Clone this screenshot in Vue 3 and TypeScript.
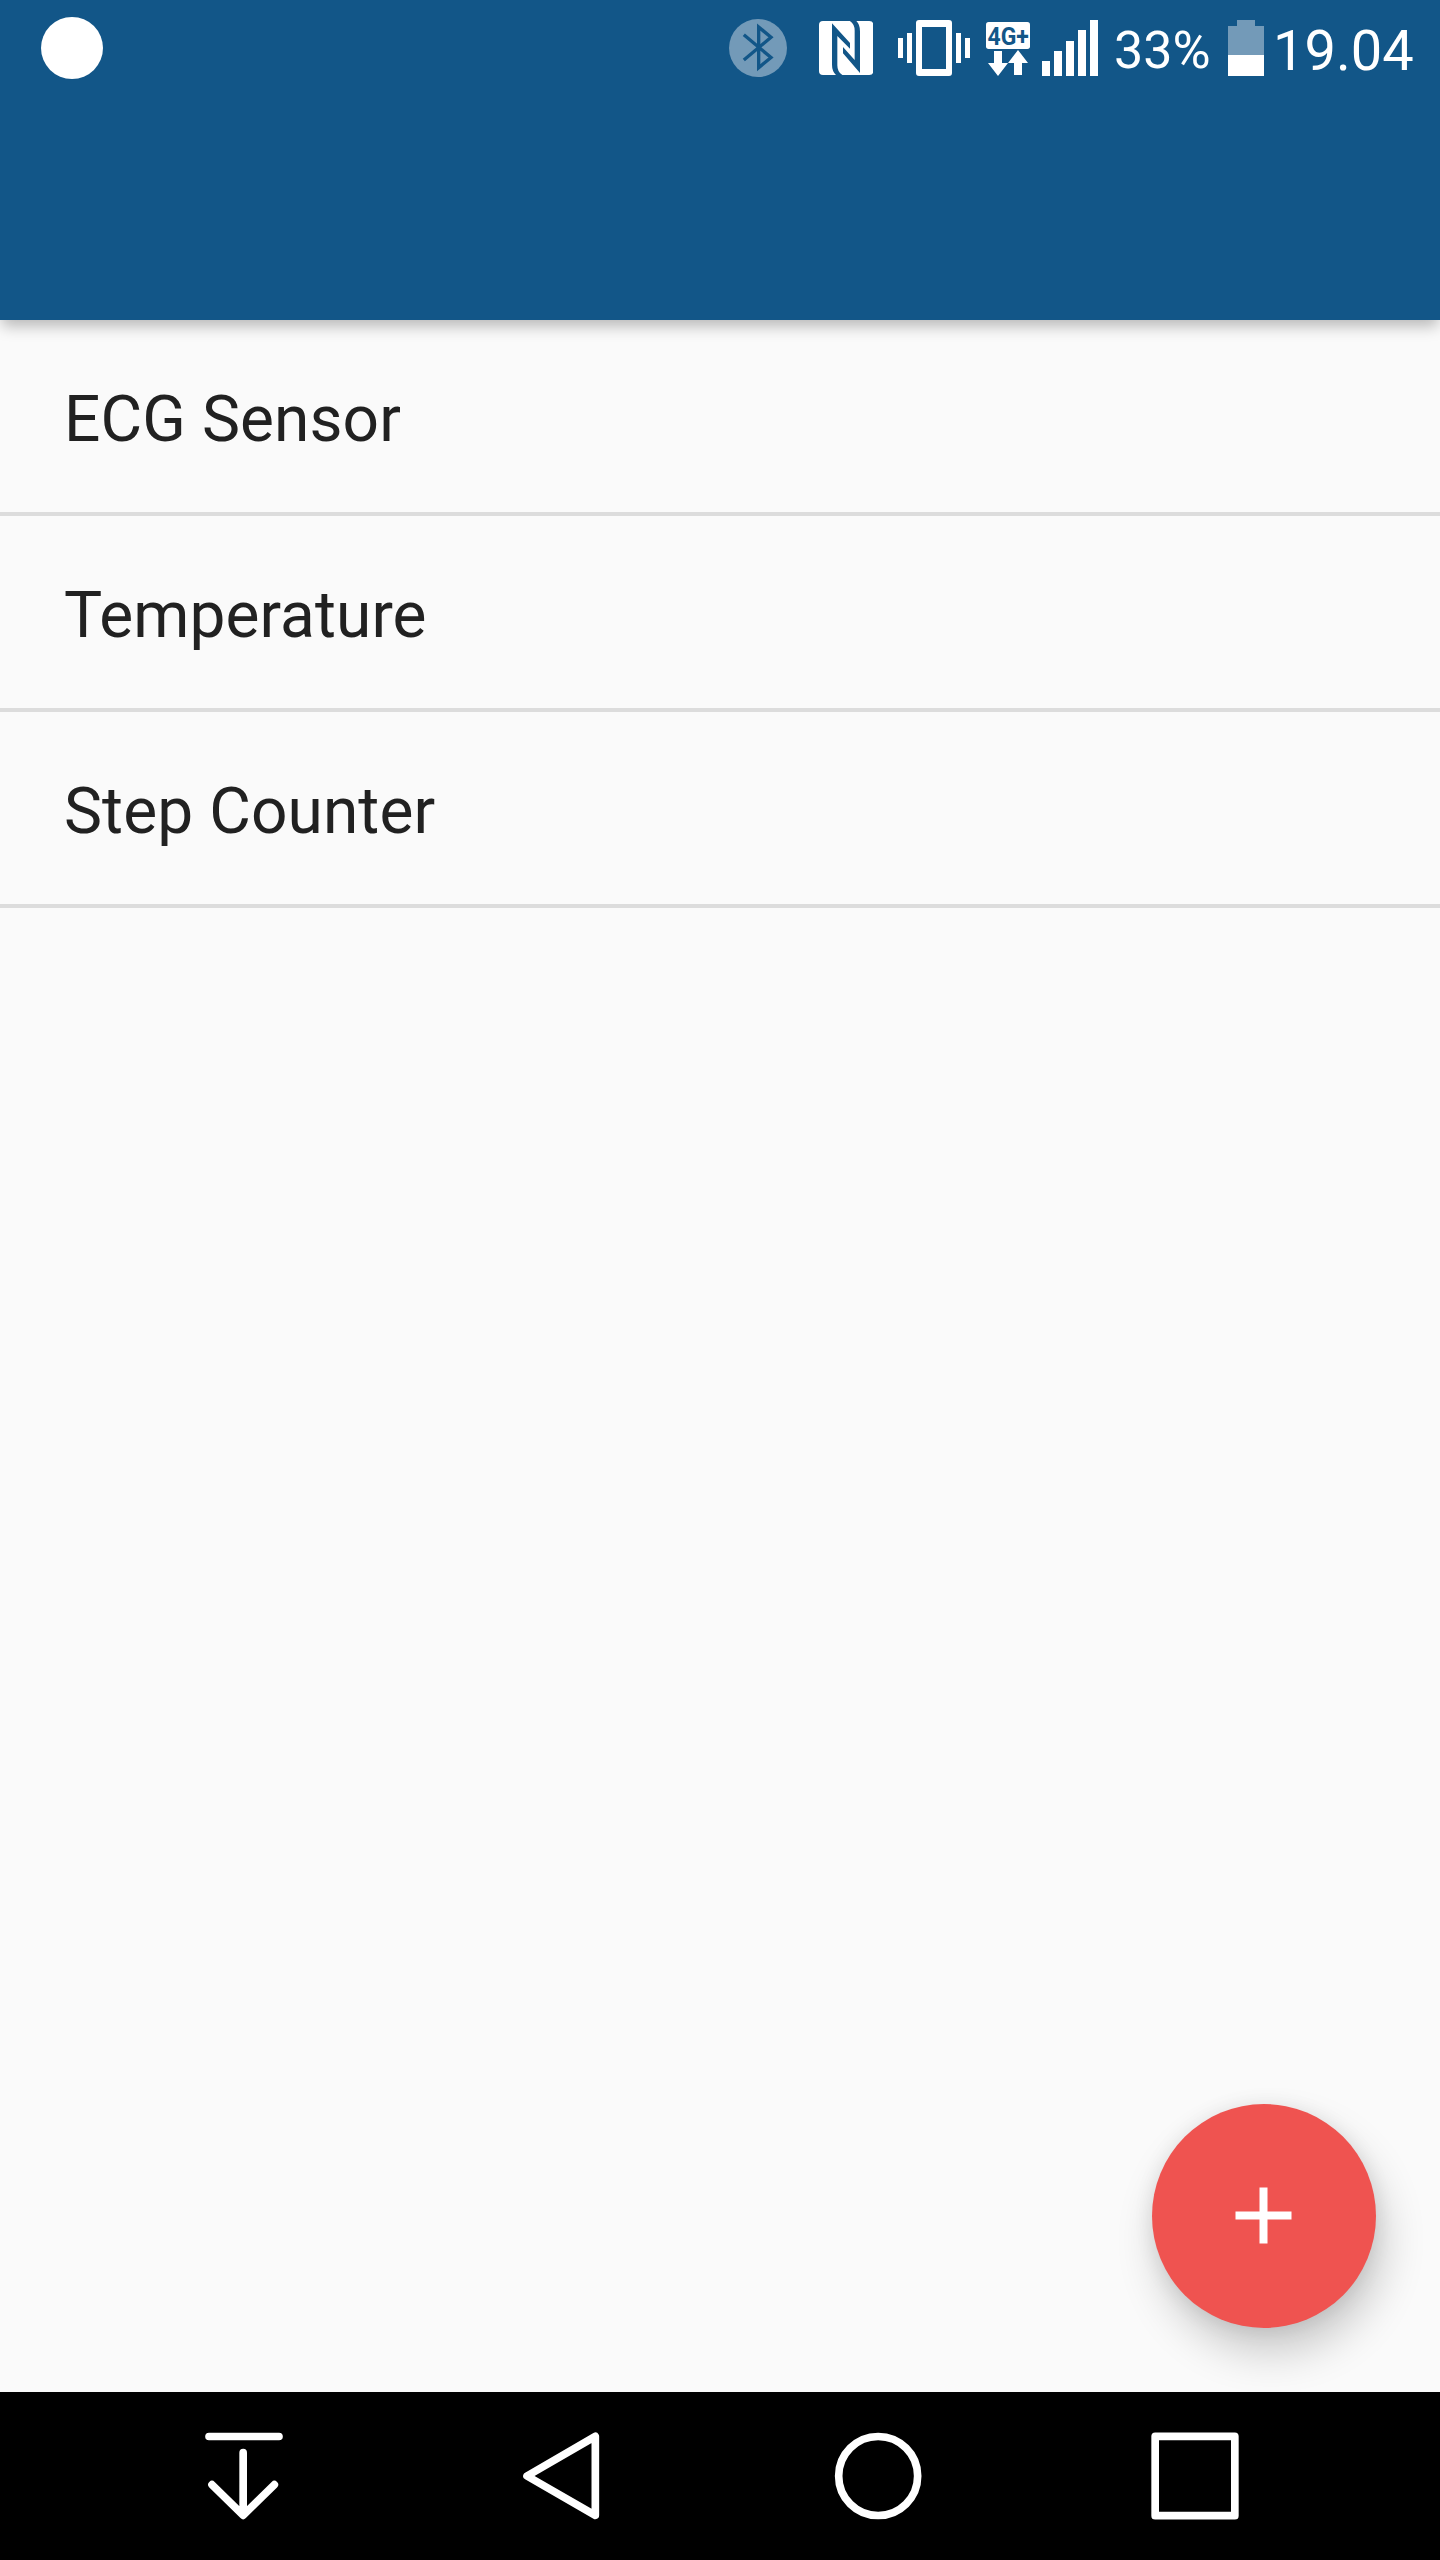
<script setup lang="ts">
import { ref } from 'vue'

interface Sensor {
  id: number
  name: string
}

const sensors = ref<Sensor[]>([
  { id: 1, name: 'ECG Sensor' },
  { id: 2, name: 'Temperature' },
  { id: 3, name: 'Step Counter' },
])

const battery = '33%'
const clock = '19.04'
const network = '4G+'
</script>

<template>
  <div class="screen">
    <header class="app-bar">
      <div class="status-bar">
        <span class="notification"></span>
        <div class="indicators">
          <svg class="bluetooth" viewBox="57 57 174 174">
            <circle cx="144" cy="144" r="87" fill="#739ab8" />
            <path d="M101.500 104.500 L183 172.500 L146 203 V81 L183 112 L101.500 180" fill="none" stroke="#125688" stroke-width="10" />
          </svg>
          <svg class="nfc" viewBox="327 63 163 162">
            <rect x="327" y="63" width="163" height="162" rx="12" fill="#fff" />
            <path d="M366 70 L420 129 V146 L382 108 V196 Q382 218 399 226 H379 Q366 214 366 194 Z" fill="#125688" />
            <path d="M450 219 L399 160 V141 L434 180 V92 Q434 71 418 62 H438 Q450 72 450 94 Z" fill="#125688" />
          </svg>
          <svg class="vibrate" viewBox="564 60 216 168" fill="#fff">
            <path fill-rule="evenodd" d="M627 60 H717 Q726 60 726 69 V219 Q726 228 717 228 H627 Q618 228 618 219 V69 Q618 60 627 60 Z M636 81 V207 H708 V81 Z" />
            <path d="M564 114h15v60h-15z M591 99h15v90h-15z M738 99h15v90h-15z M765 114h15v60h-15z" />
          </svg>
          <svg class="network" viewBox="78 60 132 168">
            <rect x="78" y="66" width="132" height="81" rx="8" fill="#fff" />
            <text x="82.500" y="135" textLength="124" lengthAdjust="spacingAndGlyphs" class="network-label">{{ network }}</text>
            <path d="M102 153h24v36h18l-30 39l-30 -39h18z M174 150l30 39h-18v36h-24v-36h-18z" fill="#fff" />
          </svg>
          <svg class="signal" viewBox="246 60 168 168" fill="#fff">
            <path d="M246 183h24v45h-24z M282 153h24v75h-24z M318 123h24v105h-24z M354 90h24v138h-24z M390 60h24v168h-24z" />
          </svg>
          <span class="battery-text">{{ battery }}</span>
          <svg class="battery" viewBox="114 60 108 168">
            <path d="M141 60h54v18h27v87h-108v-87h27z" fill="#739ab8" />
            <path d="M114 165h108v63h-108z" fill="#fff" />
          </svg>
          <span class="clock">{{ clock }}</span>
        </div>
      </div>
    </header>

    <main class="content">
      <ul class="sensor-list">
        <li v-for="sensor in sensors" :key="sensor.id" class="sensor">{{ sensor.name }}</li>
      </ul>
      <button class="fab" type="button" aria-label="Add sensor">
        <svg viewBox="0 0 96 96" fill="#fff">
          <path d="M43.500 19.500h8v24h24v8h-24v24h-8v-24h-24v-8h24z" />
        </svg>
      </button>
    </main>

    <nav class="nav-bar">
      <svg class="nav-icon drop" viewBox="60 156 264 264">
        <path d="M87 169.500H297 M189.500 218V405 M96 314L189.500 406L283 314" />
      </svg>
      <svg class="nav-icon back" viewBox="60 156 264 264">
        <path d="M81 288L286 169V406Z" />
      </svg>
      <svg class="nav-icon home" viewBox="72 156 264 264">
        <circle cx="204.500" cy="288" r="118.500" />
      </svg>
      <svg class="nav-icon recent" viewBox="93 156 264 264">
        <rect x="105.500" y="169" width="239" height="238" />
      </svg>
    </nav>
  </div>
</template>

<style>
body {
  margin: 0;
}
</style>

<style scoped>
.screen {
  display: flex;
  flex-direction: column;
  width: 1440px;
  height: 2560px;
  overflow: hidden;
  background: #fafafa;
  font-family: Roboto, sans-serif;
}

.app-bar {
  flex: none;
  height: 320px;
  background: #125688;
  box-shadow: 0 8px 14px -2px rgba(0, 0, 0, 0.27);
  z-index: 1;
}

.status-bar {
  display: flex;
  justify-content: space-between;
  height: 96px;
  align-items: center;
  padding-left: 41px;
  color: #fff;
}

.notification {
  width: 62px;
  height: 62px;
  border-radius: 50%;
  background: #fff;
}

.indicators {
  display: flex;
  align-items: center;
  width: 711px;
  height: 96px;
}

.indicators > * {
  flex: none;
}

.bluetooth {
  width: 58px;
  height: 58px;
}

.nfc {
  width: 54.330px;
  height: 54px;
  margin-left: 32px;
}

.vibrate {
  width: 72px;
  height: 56px;
  margin-left: 24.670px;
}

.network {
  width: 44px;
  height: 56px;
  margin-left: 16px;
  overflow: visible;
}

.network-label {
  font-size: 79px;
  font-weight: 700;
  fill: #125688;
}

.signal {
  width: 56px;
  height: 56px;
  margin-left: 12px;
}

.battery-text {
  width: 114px;
  margin-left: 16px;
  padding-top: 5px;
  font-size: 52px;
  line-height: 62px;
}

.battery {
  width: 36px;
  height: 56px;
}

.clock {
  margin-left: 9px;
  padding-top: 6px;
  font-size: 56px;
  line-height: 66px;
}

.content {
  position: relative;
  flex: 1;
}

.sensor-list {
  margin: 0;
  padding: 0;
  list-style: none;
}

.sensor {
  box-sizing: border-box;
  height: 196px;
  padding: 7px 64px 0;
  border-bottom: 4px solid #dcdcdc;
  color: #212121;
  font-size: 64px;
  line-height: 186px;
  letter-spacing: 0.1px;
}

.fab {
  position: absolute;
  right: 64px;
  bottom: 64px;
  display: flex;
  align-items: center;
  justify-content: center;
  width: 224px;
  height: 224px;
  padding: 0;
  border: 0;
  border-radius: 50%;
  background: #ef5350;
  box-shadow: 7px 24px 44px rgba(0, 0, 0, 0.2), 0 2px 20px rgba(0, 0, 0, 0.09);
}

.fab svg {
  width: 96px;
  height: 96px;
}

.nav-bar {
  display: flex;
  flex: none;
  align-items: center;
  height: 168px;
  background: #000;
  z-index: 1;
}

.nav-icon {
  width: 88px;
  height: 88px;
  fill: none;
  stroke: #fff;
  stroke-width: 23px;
  stroke-linecap: round;
  stroke-linejoin: round;
}

.drop {
  margin-left: 200px;
}

.back {
  margin-left: 232px;
}

.home {
  margin-left: 226px;
}

.recent {
  margin-left: 229px;
}
</style>
